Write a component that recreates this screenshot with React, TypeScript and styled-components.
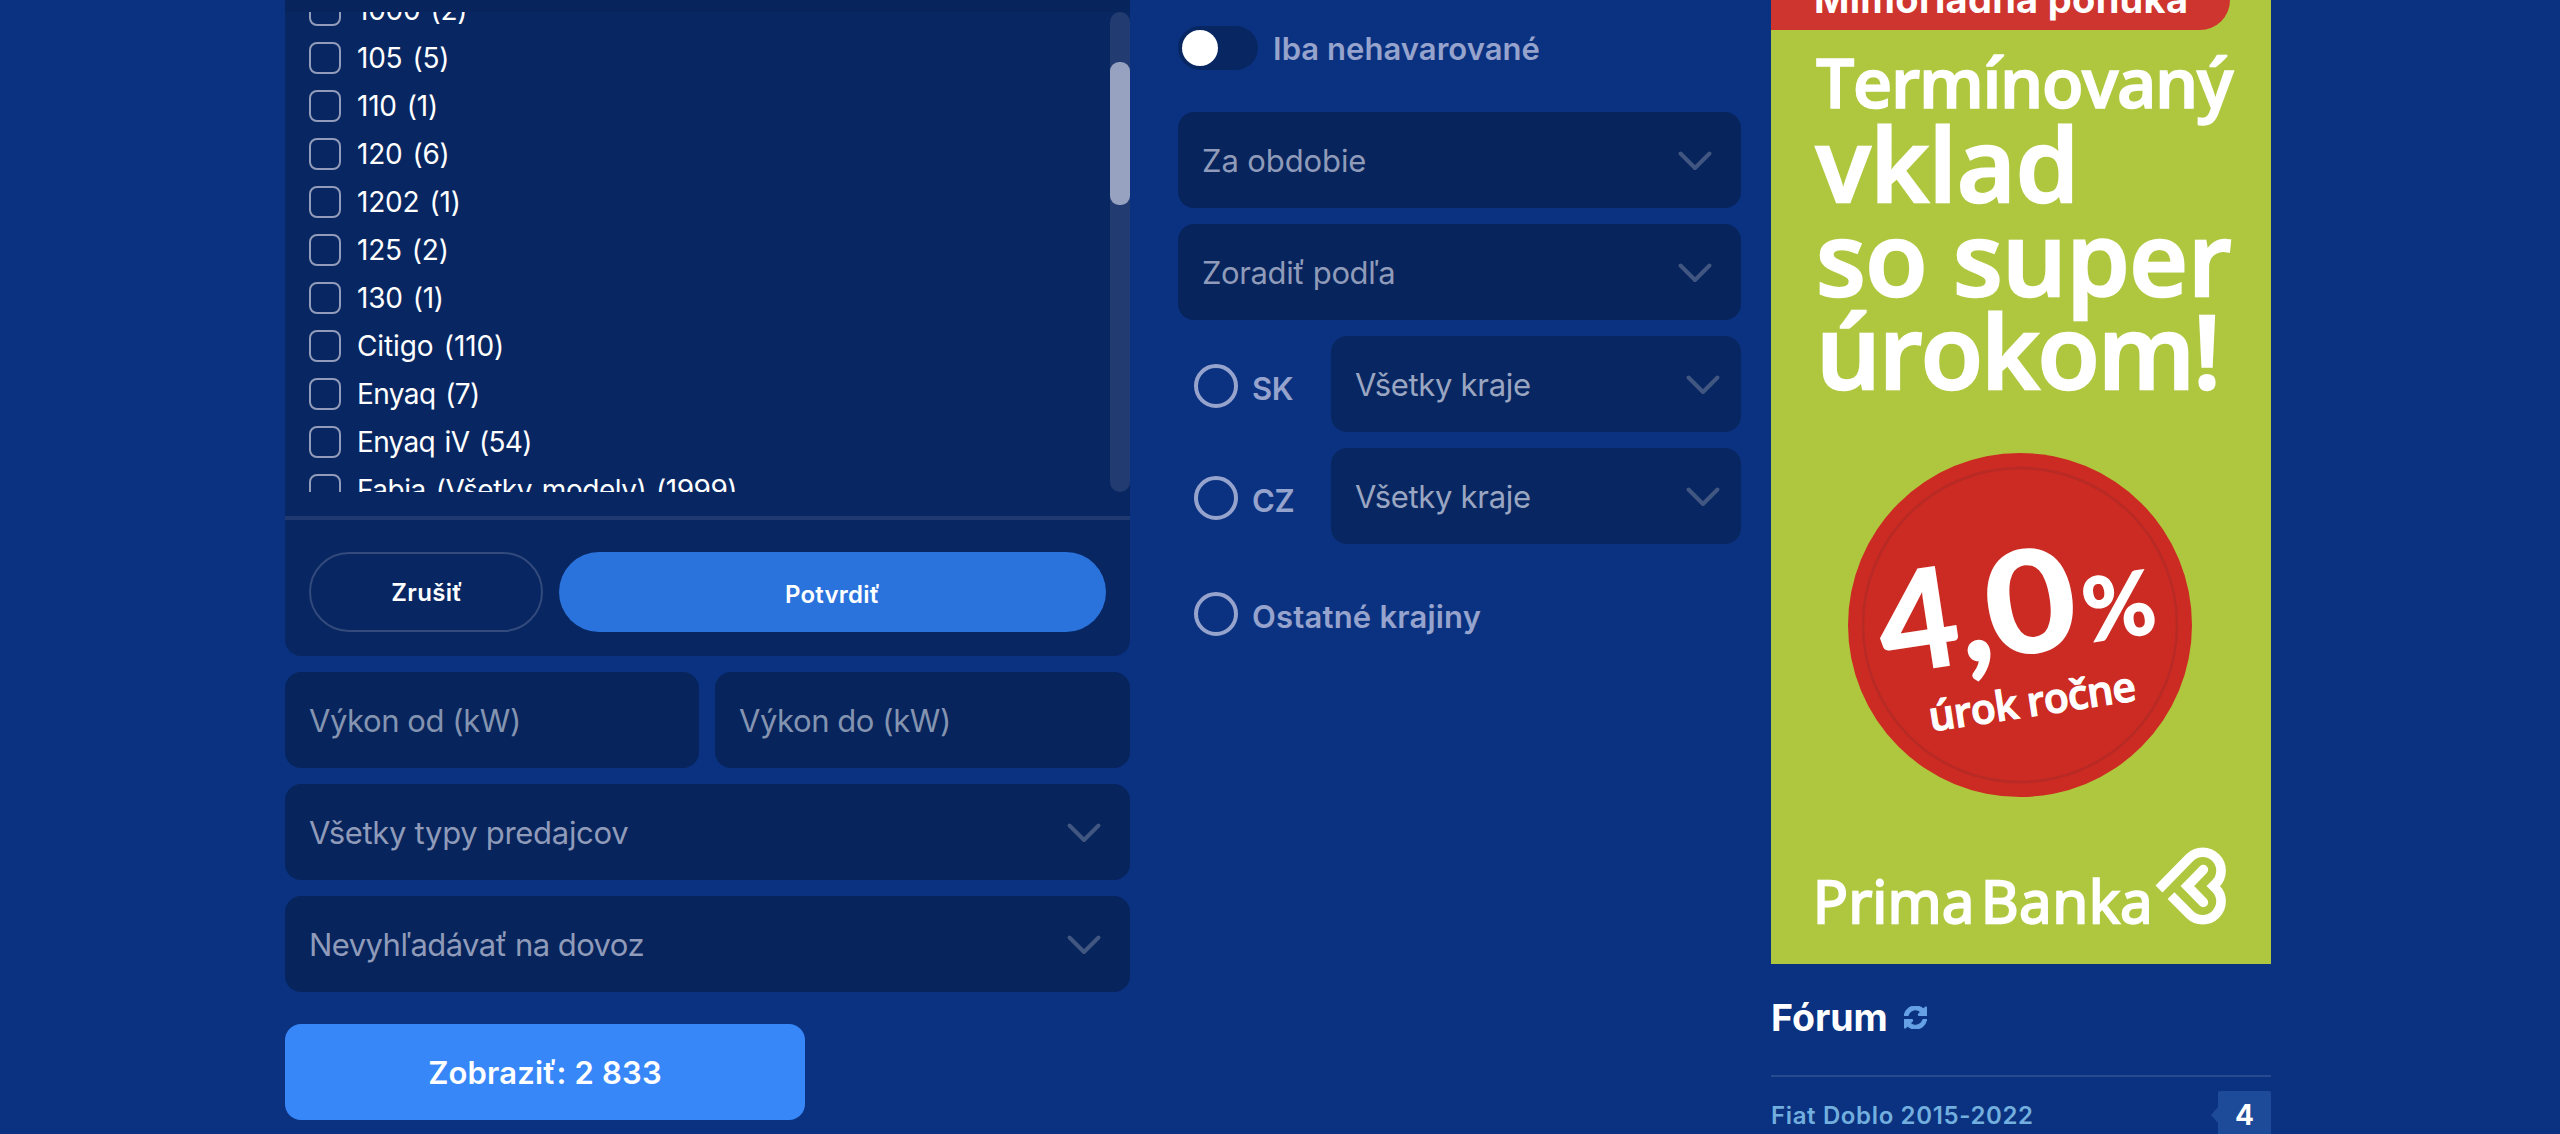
import React from "react";
import styled, { createGlobalStyle } from "styled-components";

const ui = `Inter, "Liberation Sans", sans-serif`;
const promo = `"Open Sans", "Noto Sans", sans-serif`;

const c = {
  page: "#0b3280",
  panel: "#082762",
  field: "#07245c",
  hint: "#8f9bb9",
  hintSoft: "#8494b0",
  label: "#96a3cc",
  lime: "#afc73f",
};

const GlobalStyle = createGlobalStyle`
  *, *::before, *::after { box-sizing: border-box; }
  body { margin: 0; background: ${c.page}; font-family: ${ui}; overflow: hidden; }
  button { font-family: inherit; border: 0; margin: 0; cursor: pointer; }
`;

const Page = styled.main`
  display: flex;
  align-items: flex-start;
  width: 2560px;
  height: 1134px;
  padding-left: 285px;
  overflow: hidden;
  background: ${c.page};
`;

const Text = styled.span<{ $ls?: number }>`
  white-space: nowrap;
  letter-spacing: ${(p) => p.$ls ?? 0}px;
`;

/* Left column: model picker and filters */

const FilterColumn = styled.section`
  display: flex;
  flex-direction: column;
  gap: 16px;
  width: 845px;
`;

const ModelPanel = styled.div`
  display: flex;
  flex-direction: column;
  height: 656px;
  border-radius: 0 0 16px 16px;
  background: ${c.panel};
  overflow: hidden;
`;

const PanelTop = styled.div`
  flex: none;
  height: 12px;
  background: ${c.field};
`;

const ModelScroller = styled.div`
  display: flex;
  justify-content: space-between;
  flex: none;
  height: 480px;
  overflow: hidden;
`;

const ModelList = styled.ul`
  display: flex;
  flex-direction: column;
  gap: 16px;
  margin: -18px 0 0;
  padding: 0 0 0 24px;
  list-style: none;
`;

const ModelItem = styled.li`
  display: flex;
  align-items: center;
  gap: 16px;
  flex: none;
  height: 32px;
  color: #fff;
  font-size: 28px;
  line-height: 32px;
  word-spacing: 2.5px;
`;

const Checkbox = styled.span`
  flex: none;
  width: 32px;
  height: 32px;
  border: 2px solid #929cba;
  border-radius: 8px;
`;

const ScrollTrack = styled.div`
  width: 20px;
  padding-top: 50px;
  border-radius: 10px;
  background: #223b71;
`;

const ScrollThumb = styled.div`
  height: 143px;
  border-radius: 9px;
  background: #97a1c0;
`;

const PanelFooter = styled.div`
  display: flex;
  gap: 16px;
  margin-top: 24px;
  padding: 32px 24px 24px;
  border-top: 4px solid #203a71;
`;

const CancelButton = styled.button`
  width: 234px;
  height: 80px;
  padding: 0 0 0 2px;
  border: 2px solid #324a7c;
  border-radius: 40px;
  background: transparent;
  color: #fff;
  font-size: 24px;
  font-weight: 600;
`;

const ConfirmButton = styled.button`
  flex: 1;
  height: 80px;
  padding: 4px 0 0;
  border-radius: 40px;
  background: #2a73dd;
  color: #fff;
  font-size: 24px;
  font-weight: 600;
`;

const FieldRow = styled.div`
  display: grid;
  grid-template-columns: 414px 1fr;
  gap: 16px;
`;

const Field = styled.div<{ $tone?: "soft" | "region" }>`
  display: flex;
  align-items: center;
  justify-content: space-between;
  flex: 1;
  height: 96px;
  min-height: 96px;
  padding: 1px ${(p) => (p.$tone === "region" ? 20 : 28)}px 0 24px;
  border-radius: 16px;
  background: ${(p) => (p.$tone === "region" ? c.panel : c.field)};
  color: ${(p) => (p.$tone === "region" ? "#9aa6c1" : p.$tone === "soft" ? c.hintSoft : c.hint)};
  font-size: 31px;
  line-height: 40px;
`;

const SubmitButton = styled.button`
  width: 520px;
  height: 96px;
  margin-top: 16px;
  padding: 0;
  border-radius: 16px;
  background: #3787f9;
  color: #fff;
  font-size: 31px;
  font-weight: 600;
`;

/* Middle column: switches and regions */

const OptionColumn = styled.section`
  display: flex;
  flex-direction: column;
  gap: 16px;
  width: 563px;
  margin-left: 48px;
  padding-top: 26px;
`;

const SwitchRow = styled.div`
  display: flex;
  align-items: center;
  gap: 15px;
  height: 44px;
  margin-bottom: 26px;
  color: ${c.label};
  font-size: 31px;
  font-weight: 600;
`;

const Switch = styled.span`
  display: flex;
  align-items: center;
  width: 80px;
  height: 44px;
  padding: 4px;
  border-radius: 22px;
  background: ${c.panel};
`;

const Knob = styled.span`
  width: 36px;
  height: 36px;
  border-radius: 50%;
  background: #fff;
`;

const CountryRow = styled.div<{ $gapTop?: number }>`
  display: flex;
  align-items: center;
  height: 96px;
  margin-top: ${(p) => p.$gapTop ?? 0}px;
`;

const CountryLabel = styled.label<{ $wide?: boolean }>`
  display: flex;
  align-items: center;
  gap: 14px;
  width: ${(p) => (p.$wide ? "auto" : "153px")};
  padding: 4px 0 0 16px;
  color: ${c.label};
  font-size: 31px;
  font-weight: 600;
  line-height: 40px;

  ${Text} {
    padding-top: 5px;
  }
`;

const Radio = styled.span`
  flex: none;
  width: 44px;
  height: 44px;
  border: 4px solid ${c.label};
  border-radius: 50%;
`;

/* Right column: banner and forum */

const SideColumn = styled.aside`
  width: 500px;
  margin-left: 30px;
`;

const Ad = styled.div`
  display: flex;
  flex-direction: column;
  height: 964px;
  background: ${c.lime};
  color: #fff;
  font-family: ${promo};
  overflow: hidden;
`;

const AdRibbon = styled.div`
  flex: none;
  width: 459px;
  height: 30px;
  padding-left: 43px;
  border-radius: 0 0 32px 0;
  background: #cf352f;
  font-family: ${ui};
  font-size: 38px;
  font-weight: 700;
  line-height: 40px;
  overflow: hidden;

  ${Text} {
    display: block;
    margin-top: -21px;
  }
`;

const AdHeadline = styled.div`
  display: flex;
  flex-direction: column;
  padding: 18px 0 0 45px;
  font-size: 102px;
  font-weight: 600;
  line-height: 93.5px;
  -webkit-text-stroke: 2.4px #fff;
`;

const AdLead = styled(Text)`
  font-size: 68px;
  line-height: 68px;
  -webkit-text-stroke-width: 1.6px;
`;

const AdBadge = styled.svg`
  flex: none;
  display: block;
  margin: 55.5px 0 0 76px;
  fill: #fff;
`;

const AdLogo = styled.svg`
  flex: none;
  display: block;
  margin: 38px 0 0 41px;
  fill: #fff;
`;

const ForumHeader = styled.div`
  display: flex;
  align-items: center;
  height: 113px;
  padding: 0 0 4px 0;
  border-bottom: 2px solid #264b90;
`;

const ForumTitle = styled.h2`
  margin: 0 16px 0 0;
  color: #fff;
  font-size: 37.5px;
  font-weight: 700;
  line-height: 44px;
`;

const ForumRow = styled.div`
  display: flex;
  align-items: center;
  justify-content: space-between;
  padding: 14px 0 0;
  color: #72aede;
  font-size: 24px;
  font-weight: 600;
`;

const ReplyCount = styled.span`
  position: relative;
  width: 53px;
  height: 48px;
  border-radius: 2px;
  background: #1e4b99;
  color: #fff;
  font-size: 28px;
  font-weight: 700;
  line-height: 48px;
  text-align: center;

  &::before {
    content: "";
    position: absolute;
    left: -7px;
    top: 16px;
    border: 8px solid transparent;
    border-left: 0;
    border-right: 7px solid #1e4b99;
  }
`;

const Chevron = () => (
  <svg width="36" height="22" viewBox="0 0 36 22" fill="none" aria-hidden>
    <path d="M3.5 3.5 18 18 32.5 3.5" stroke="#425682" strokeWidth="4" strokeLinecap="round" strokeLinejoin="round" />
  </svg>
);

const RefreshIcon = () => (
  <svg width="23" height="23" viewBox="0 0 1536 1536" fill="#66a1e6" stroke="#66a1e6" strokeWidth="70" aria-hidden>
    <path d="M1511 928q0 5-1 7-64 268-268 434.500t-478 166.500q-146 0-282.500-55t-243.500-157l-129 129q-19 19-45 19t-45-19-19-45v-448q0-26 19-45t45-19h448q26 0 45 19t19 45-19 45l-137 137q71 66 161 102t187 36q134 0 250-65t186-179q11-17 53-117 8-23 30-23h192q13 0 22.500 9.500t9.500 22.500zm25-800v448q0 26-19 45t-45 19h-448q-26 0-45-19t-19-45 19-45l138-138q-148-137-349-137-134 0-250 65t-186 179q-11 17-53 117-8 23-30 23h-199q-13 0-22.500-9.500t-9.500-22.500v-7q65-268 270-434.500t480-166.500q146 0 284 55.500t245 156.500l130-129q19-19 45-19t45 19 19 45z" />
  </svg>
);

const models: [string, number][] = [
  ["1000 (2)", -0.25],
  ["105 (5)", -0.25],
  ["110 (1)", -0.25],
  ["120 (6)", -0.25],
  ["1202 (1)", -0.2],
  ["125 (2)", -0.25],
  ["130 (1)", -0.25],
  ["Citigo (110)", -0.1],
  ["Enyaq (7)", -0.6],
  ["Enyaq iV (54)", -0.7],
  ["Fabia (Všetky modely) (1999)", -0.48],
];

const Select = ({ text, ls, region }: { text: string; ls: number; region?: boolean }) => (
  <Field $tone={region ? "region" : undefined}>
    <Text $ls={ls}>{text}</Text>
    <Chevron />
  </Field>
);

export default function App() {
  return (
    <>
      <GlobalStyle />
      <Page>
        <FilterColumn>
          <ModelPanel>
            <PanelTop />
            <ModelScroller>
              <ModelList>
                {models.map(([name, ls]) => (
                  <ModelItem key={name}>
                    <Checkbox />
                    <Text $ls={ls}>{name}</Text>
                  </ModelItem>
                ))}
              </ModelList>
              <ScrollTrack>
                <ScrollThumb />
              </ScrollTrack>
            </ModelScroller>
            <PanelFooter>
              <CancelButton>
                <Text $ls={0.33}>Zrušiť</Text>
              </CancelButton>
              <ConfirmButton>
                <Text $ls={0.2}>Potvrdiť</Text>
              </ConfirmButton>
            </PanelFooter>
          </ModelPanel>
          <FieldRow>
            <Field $tone="soft">
              <Text $ls={-0.43}>Výkon od (kW)</Text>
            </Field>
            <Field $tone="soft">
              <Text $ls={-0.43}>Výkon do (kW)</Text>
            </Field>
          </FieldRow>
          <Select text="Všetky typy predajcov" ls={-0.3} />
          <Select text="Nevyhľadávať na dovoz" ls={-0.55} />
          <SubmitButton>
            <Text $ls={0.18}>Zobraziť: 2 833</Text>
          </SubmitButton>
        </FilterColumn>

        <OptionColumn>
          <SwitchRow>
            <Switch>
              <Knob />
            </Switch>
            <Text $ls={0.05}>Iba nehavarované</Text>
          </SwitchRow>
          <Select text="Za obdobie" ls={-0.1} />
          <Select text="Zoradiť podľa" ls={-0.4} />
          <CountryRow>
            <CountryLabel>
              <Radio />
              <Text $ls={-0.4}>SK</Text>
            </CountryLabel>
            <Select region text="Všetky kraje" ls={-0.3} />
          </CountryRow>
          <CountryRow>
            <CountryLabel>
              <Radio />
              <Text $ls={-0.4}>CZ</Text>
            </CountryLabel>
            <Select region text="Všetky kraje" ls={-0.3} />
          </CountryRow>
          <CountryRow $gapTop={4}>
            <CountryLabel $wide>
              <Radio />
              <Text $ls={0.2}>Ostatné krajiny</Text>
            </CountryLabel>
          </CountryRow>
        </OptionColumn>

        <SideColumn>
          <Ad>
            <AdRibbon>
              <Text $ls={0.3}>Mimoriadna ponuka</Text>
            </AdRibbon>
            <AdHeadline>
              <AdLead $ls={-1.35}>Termínovaný</AdLead>
              <Text $ls={-0.2}>vklad</Text>
              <Text $ls={-0.5}>so super</Text>
              <Text $ls={-2}>úrokom!</Text>
            </AdHeadline>
            <AdBadge width="346" height="346" viewBox="-1 -1 346 346">
              <circle cx="172" cy="172" r="172" fill="#cb2b22" />
              <circle cx="172" cy="172" r="157" fill="none" stroke="#b82a25" strokeWidth="2.5" />
              <g transform="rotate(-8.6 172 172)" fontFamily="Lato, sans-serif" fontWeight="700" stroke="#fff">
                <text x="32" y="201" fontSize="137" strokeWidth="2">4,</text>
                <text transform="translate(141 200.500) scale(1.100 1)" x="0" y="0" fontSize="140" strokeWidth="2.500">0</text>
                <text x="236.500" y="199.500" fontSize="88" strokeWidth="1.500">%</text>
                <text x="68" y="264" fontSize="41" strokeWidth="1.200" fontFamily="Open Sans, sans-serif" fontWeight="600" textLength="209">
                  úrok ročne
                </text>
              </g>
            </AdBadge>
            <AdLogo width="420" height="100" viewBox="1812 836 420 100">
              <g fontFamily="Open Sans, sans-serif" fontWeight="500" fontSize="58" stroke="#fff" strokeWidth="2.400">
                <text x="1813" y="923" letterSpacing="0.500">Prima</text>
                <text x="1981" y="923" letterSpacing="0.900">Banka</text>
              </g>
              <g transform="translate(2140 835) scale(.33333)" fill="none" stroke="#fff" strokeWidth="29">
                <path d="M57 162 149 68A55 55 0 0 1 227 146L220 153 227 160A55 55 0 0 1 149 238L93 182" />
                <path d="M190 104 142 153 190 202" strokeLinecap="round" />
              </g>
            </AdLogo>
          </Ad>
          <ForumHeader>
            <ForumTitle>Fórum</ForumTitle>
            <RefreshIcon />
          </ForumHeader>
          <ForumRow>
            <Text $ls={0.64}>Fiat Doblo 2015-2022</Text>
            <ReplyCount>4</ReplyCount>
          </ForumRow>
        </SideColumn>
      </Page>
    </>
  );
}
